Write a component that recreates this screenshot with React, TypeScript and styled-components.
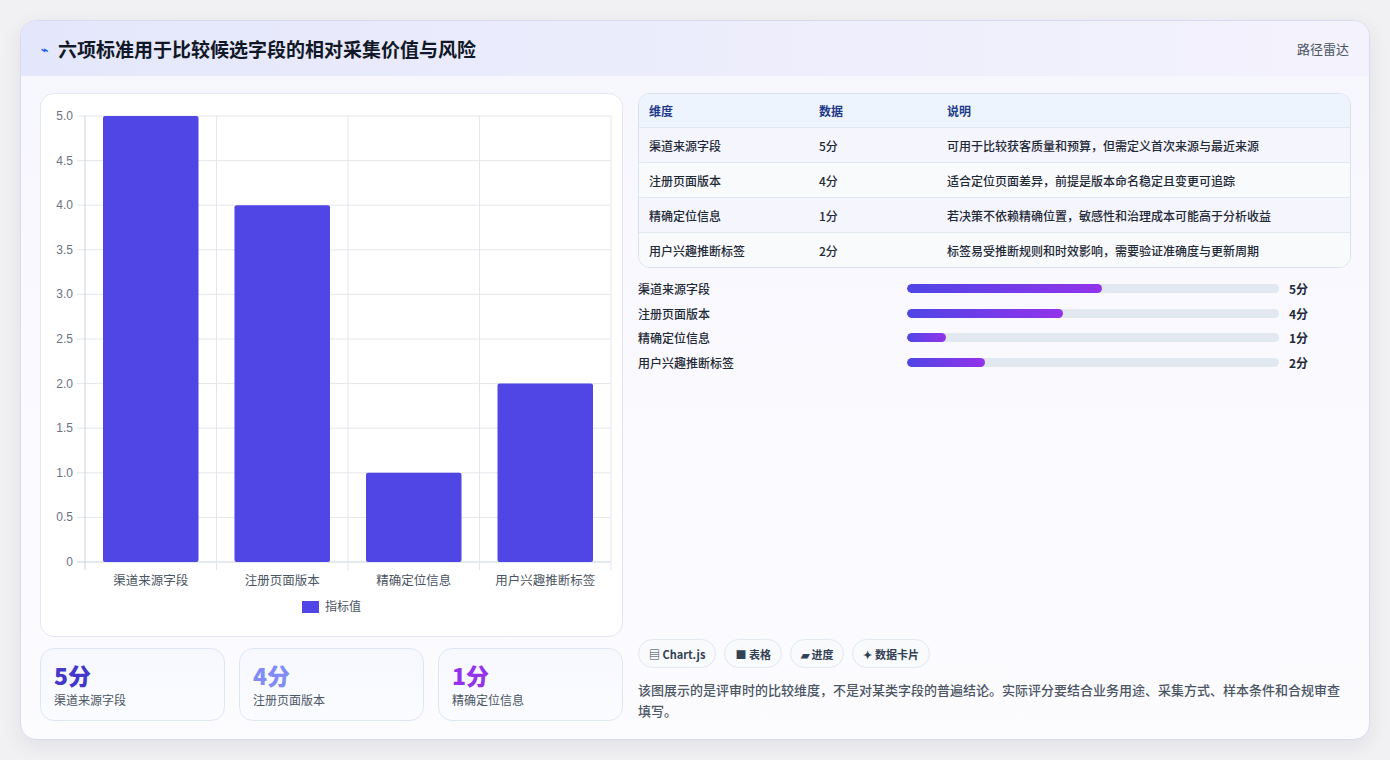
import React from "react";
import styled, { createGlobalStyle } from "styled-components";

const Global = createGlobalStyle`
  html, body { margin: 0; padding: 0; background: #f1f1f3; }
  body { font-family: "Noto Sans CJK SC", "Noto Sans", sans-serif; }
  * { box-sizing: border-box; }
`;

const Page = styled.div`
  width: 1390px; height: 760px; padding: 20px 20px 20px 20px;
`;
const Card = styled.div`
  width: 1350px; height: 720px; border-radius: 16px; overflow: hidden;
  border: 1px solid #d6dbef; background: linear-gradient(180deg, #f6f6fd 0%, #fcfcff 100%);
  box-shadow: 0 6px 20px rgba(40,40,90,0.08);
  display: flex; flex-direction: column;
`;
const Header = styled.div`
  height: 55px; flex: none; display: flex; align-items: center; justify-content: space-between;
  padding: 0 20px; background: linear-gradient(90deg, #e4e7fb 0%, #eeeefc 60%, #f3f2fd 100%);
`;
const Title = styled.h1`
  margin: 0; font-size: 19px; font-weight: 700; color: #111827; display: flex; align-items: center; gap: 10px;
`;
const Tag = styled.span` font-size: 13px; color: #4b5563; `;
const Body = styled.div`
  flex: 1; display: grid; grid-template-columns: 583px 713px; gap: 15px; padding: 17px 19px 18px 19px;
`;
const Col = styled.div` display: flex; flex-direction: column; gap: 11px; min-height: 0; `;
const ChartBox = styled.div`
  height: 544px; background: #fff; border: 1px solid #e3e7f1; border-radius: 14px;
`;
const Stats = styled.div` display: grid; grid-template-columns: repeat(3, 1fr); gap: 14px; `;
const Stat = styled.div`
  height: 73px; border: 1px solid #dfe6f3; border-radius: 14px; background: linear-gradient(180deg,#f6f8fe,#fbfcff);
  padding: 12px 13px;
`;
const StatNum = styled.div<{ c: string }>` font-size: 23px; font-weight: 800; color: ${p => p.c}; line-height: 28px; `;
const StatLbl = styled.div` font-size: 12px; color: #4b5563; margin-top: 2px; `;

const Right = styled.div` display: flex; flex-direction: column; `;
const Table = styled.div` border: 1px solid #d9e1ef; border-radius: 12px; overflow: hidden; background: #fff; `;
const Row = styled.div<{ head?: boolean; alt?: boolean }>`
  display: grid; grid-template-columns: 170px 128px 1fr; padding: 0 10px;
  height: ${p => (p.head ? 33 : 35)}px; align-items: center; font-size: 12px;
  color: ${p => (p.head ? "#1e3a8a" : "#1f2937")}; font-weight: ${p => (p.head ? 700 : 500)};
  background: ${p => (p.head ? "#eef4fe" : p.alt ? "#f8fafc" : "#f5f5fd")};
  border-top: ${p => (p.head ? "none" : "1px solid #e2e8f0")};
`;
const Bars = styled.div` display: flex; flex-direction: column; gap: 8px; margin-top: 12px; `;
const BarRow = styled.div`
  display: grid; grid-template-columns: 269px 372px auto; gap: 0; align-items: center; height: 16.5px;
  font-size: 12px; color: #1f2937; font-weight: 500;
`;
const Track = styled.div` height: 9px; border-radius: 5px; background: #e2e8f0; overflow: hidden; `;
const Fill = styled.div` height: 100%; border-radius: 5px; background: linear-gradient(90deg,#4f46e5,#9333ea); `;
const Val = styled.span` padding-left: 10px; font-weight: 700; `;
const Footer = styled.div` margin-top: auto; `;
const Chips = styled.div` display: flex; gap: 8px; `;
const Chip = styled.span`
  height: 29px; padding: 0 10px; border: 1px solid #e2e8f0; border-radius: 15px; background: #f8fafc;
  font-size: 11px; font-weight: 700; color: #334155; display: inline-flex; align-items: center; gap: 4px;
`;
const Note = styled.p` margin: 11px 0 0; font-size: 13px; line-height: 21px; color: #4b5563; font-weight: 500; `;

const data = [
  { n: "渠道来源字段", v: 5, d: "可用于比较获客质量和预算，但需定义首次来源与最近来源" },
  { n: "注册页面版本", v: 4, d: "适合定位页面差异，前提是版本命名稳定且变更可追踪" },
  { n: "精确定位信息", v: 1, d: "若决策不依赖精确位置，敏感性和治理成本可能高于分析收益" },
  { n: "用户兴趣推断标签", v: 2, d: "标签易受推断规则和时效影响，需要验证准确度与更新周期" },
];

function Chart() {
  const x0 = 44, x1 = 570, yTop = 22, yBot = 468;
  const ticks = [0, 0.5, 1, 1.5, 2, 2.5, 3, 3.5, 4, 4.5, 5];
  const cw = (x1 - x0) / 4;
  const y = (v: number) => yBot - (v / 5) * (yBot - yTop);
  return (
    <svg width="581" height="542" style={{ display: "block" }}>
      {ticks.map(t => (
        <g key={t}>
          <line x1={x0 - 8} x2={x1} y1={y(t)} y2={y(t)} stroke={t === 0 ? "#cbd5e1" : "#e5e7eb"} />
          <text x={x0 - 12} y={y(t) + 4} textAnchor="end" fontSize="12" fill="#6b7280" fontFamily="Liberation Sans, sans-serif">{t === 0 ? "0" : t.toFixed(1)}</text>
        </g>
      ))}
      {[0, 1, 2, 3, 4].map(i => (
        <line key={i} x1={x0 + i * cw} x2={x0 + i * cw} y1={yTop} y2={yBot + 8} stroke={i === 0 ? "#cbd5e1" : "#e5e7eb"} />
      ))}
      {data.map((d, i) => (
        <g key={d.n}>
          <rect x={x0 + i * cw + 18} y={y(d.v)} width={cw - 36} height={yBot - y(d.v)} fill="#4f46e5" rx="2" />
          <text x={x0 + i * cw + cw / 2} y={yBot + 23} textAnchor="middle" fontSize="12.5" fill="#4b5563">{d.n}</text>
        </g>
      ))}
      <rect x="261" y="507" width="17" height="12" fill="#4f46e5" />
      <text x="284" y="517" fontSize="12" fill="#4b5563">指标值</text>
    </svg>
  );
}

export default function App() {
  return (
    <Page>
      <Global />
      <Card>
        <Header>
          <Title><span style={{ color: "#2563eb", fontSize: 12 }}>⌁</span>六项标准用于比较候选字段的相对采集价值与风险</Title>
          <Tag>路径雷达</Tag>
        </Header>
        <Body>
          <Col>
            <ChartBox><Chart /></ChartBox>
            <Stats>
              <Stat><StatNum c="#4338ca">5分</StatNum><StatLbl>渠道来源字段</StatLbl></Stat>
              <Stat><StatNum c="#818cf8">4分</StatNum><StatLbl>注册页面版本</StatLbl></Stat>
              <Stat><StatNum c="#9333ea">1分</StatNum><StatLbl>精确定位信息</StatLbl></Stat>
            </Stats>
          </Col>
          <Right>
            <Table>
              <Row head><span>维度</span><span>数据</span><span>说明</span></Row>
              {data.map((d, i) => (
                <Row key={d.n} alt={i % 2 === 1}><span>{d.n}</span><span>{d.v}分</span><span>{d.d}</span></Row>
              ))}
            </Table>
            <Bars>
              {data.map(d => (
                <BarRow key={d.n}>
                  <span>{d.n}</span>
                  <Track><Fill style={{ width: `${d.v * 10.5}%` }} /></Track>
                  <Val>{d.v}分</Val>
                </BarRow>
              ))}
            </Bars>
            <Footer>
              <Chips>
                <Chip>▤ Chart.js</Chip>
                <Chip>■ 表格</Chip>
                <Chip>▰ 进度</Chip>
                <Chip>✦ 数据卡片</Chip>
              </Chips>
              <Note>该图展示的是评审时的比较维度，不是对某类字段的普遍结论。实际评分要结合业务用途、采集方式、样本条件和合规审查填写。</Note>
            </Footer>
          </Right>
        </Body>
      </Card>
    </Page>
  );
}
